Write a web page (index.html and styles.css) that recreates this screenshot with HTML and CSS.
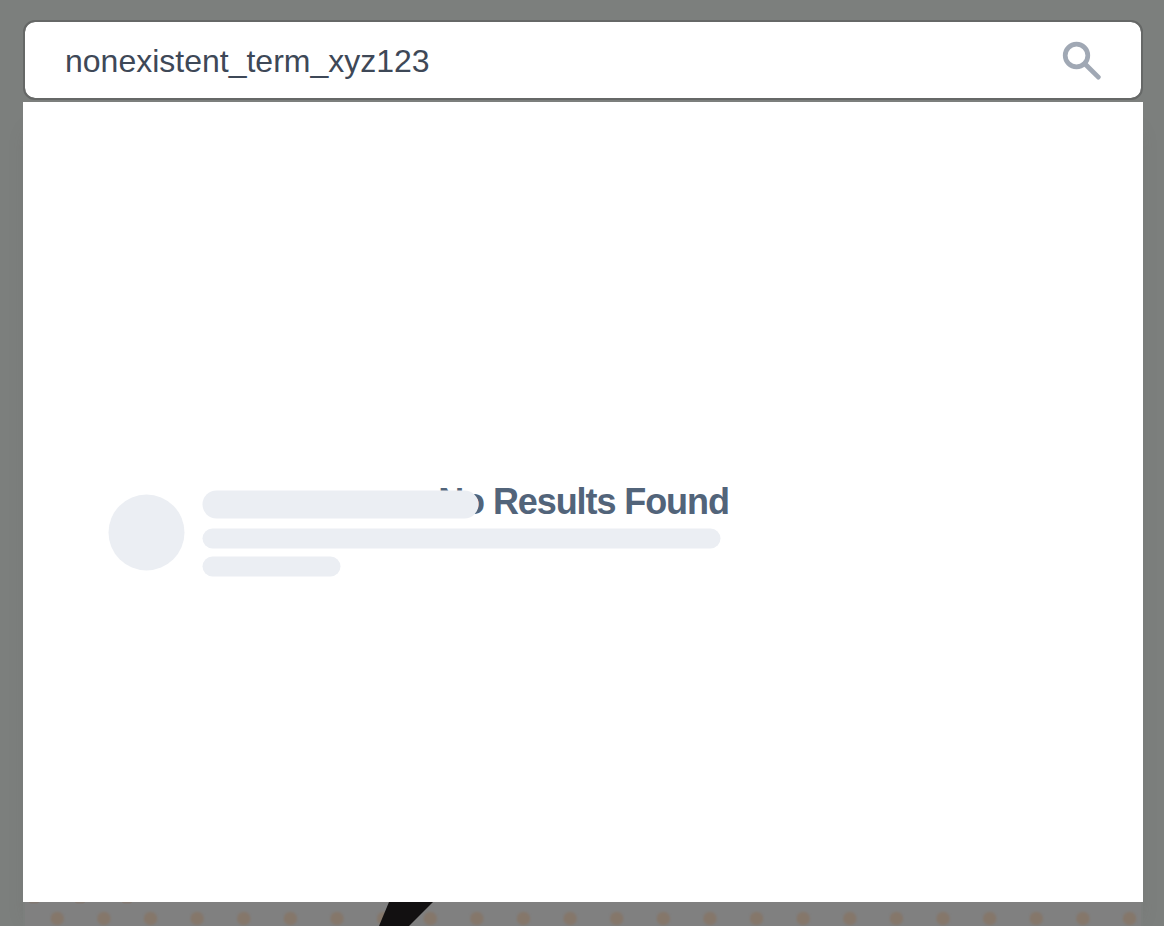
FILE: index.html
```html
<!DOCTYPE html>
<html lang="en">
<head>
<meta charset="utf-8">
<title>Search</title>
<link rel="stylesheet" href="styles.css">
</head>
<body>
<main class="page">
  <div class="search">
    <span class="query">nonexistent_term_xyz123</span>
    <svg class="search-icon" width="40" height="40" viewBox="0 0 40 40" fill="none" stroke="#a0a8b4">
      <circle cx="14.5" cy="15.5" r="11.3" stroke-width="4.7"/>
      <path d="M22.8 23.8L36.3 37.1" stroke-width="4.8" stroke-linecap="round"/>
    </svg>
  </div>
  <section class="results">
    <h1 class="message">No Results Found</h1>
    <div class="skeleton">
      <div class="avatar"></div>
      <div class="lines">
        <div class="line title"></div>
        <div class="line long"></div>
        <div class="line short"></div>
      </div>
    </div>
  </section>
  <svg class="backdrop" width="1120" height="24" viewBox="0 0 1120 24">
    <defs>
      <filter id="soft"><feGaussianBlur stdDeviation="1"/></filter>
      <pattern id="dots" x="11" y="-6.5" width="46.62" height="46" patternUnits="userSpaceOnUse">
        <circle cx="23.3" cy="23" r="6.8" fill="#85776b" filter="url(#soft)"/>
      </pattern>
    </defs>
    <rect width="1120" height="24" fill="#7c7f7d"/>
    <rect x="2" width="1116" height="24" fill="#808080"/>
    <rect x="2" width="1116" height="24" fill="url(#dots)"/>
    <g fill="#807770"><ellipse cx="11" cy="0" rx="5" ry="1.5"/><ellipse cx="57" cy="0" rx="5" ry="1.5"/><ellipse cx="104" cy="0" rx="5" ry="1.5"/></g>
    <path d="M366 0H410L386 24H356Z" fill="#121011"/>
  </svg>
</main>
</body>
</html>
```
FILE: styles.css
```css
* { box-sizing: border-box; }
body {
  margin: 0;
  background: #7c7f7d;
  font-family: "Liberation Sans", Arial, sans-serif;
}
.page {
  width: 1164px;
  height: 926px;
  padding: 20px 21px 0 23px;
  overflow: hidden;
}
.search {
  display: flex;
  align-items: center;
  justify-content: space-between;
  height: 80px;
  padding: 0 39px 0 40px;
  border: 2px solid #666867;
  border-radius: 12px;
  background: #fff;
  background-clip: padding-box;
}
.query {
  padding-top: 2px;
  color: #3e4857;
  font-size: 32px;
  line-height: 40px;
}
.search-icon { display: block; }
.results {
  display: grid;
  height: 800px;
  margin-top: 2px;
  background: #fff;
  box-shadow: 0 24px 18px -8px rgba(90, 80, 80, 0.35);
}
.message, .skeleton { grid-area: 1 / 1; }
.message {
  align-self: center;
  justify-self: center;
  margin: 0;
  padding-left: 1px;
  color: #52647a;
  font-size: 36px;
  line-height: 40px;
  letter-spacing: -1.08px;
}
.skeleton {
  z-index: 1;
  display: flex;
  gap: 18px;
  padding: 388px 0 0 85px;
  transform: translate(0.5px, 0.5px);
}
.avatar {
  width: 76px;
  height: 76px;
  margin-top: 4px;
  border-radius: 50%;
  background: #ebeef3;
}
.line {
  height: 20px;
  margin-bottom: 8px;
  border-radius: 10px;
  background: #ebeef3;
}
.title {
  width: 276px;
  height: 28px;
  margin-bottom: 10px;
  border-radius: 14px;
}
.long { width: 518px; }
.short { width: 138px; }
.backdrop {
  position: relative;
  display: block;
}
```
